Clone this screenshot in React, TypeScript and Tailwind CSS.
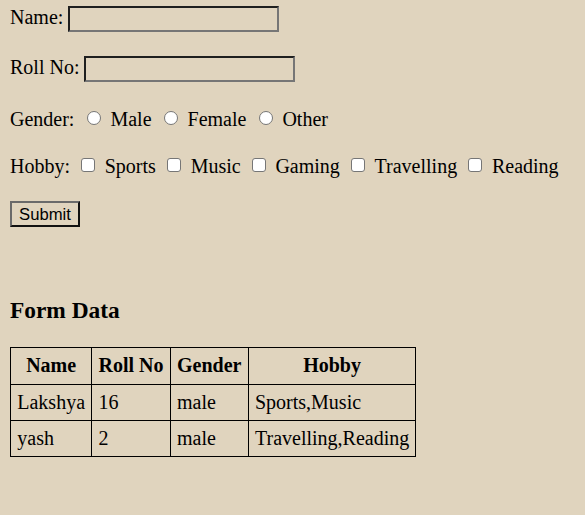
import React from "react";

const Radio = () => (
  <span className="ml-[11.25px] mr-[8.75px] mt-[2.5px] flex h-[16px] w-[16px] shrink-0 items-center justify-center">
    <span className="block h-[14px] w-[14px] rounded-full border border-[#767676] bg-white" />
  </span>
);

const Check = () => (
  <span className="ml-[10px] mr-[8.75px] mt-[1.5px] flex h-[16px] w-[16px] shrink-0 items-center justify-center">
    <span className="block h-[14px] w-[14px] rounded-[3px] border border-[#767676] bg-white" />
  </span>
);

const TextInput = () => (
  <span className="ml-[5px] block h-[26px] w-[211px] shrink-0 border-2 border-t-[#1f1f1f] border-l-[#1f1f1f] border-b-[#767676] border-r-[#767676]" />
);

export default function App() {
  const rows = [
    { name: "Lakshya", roll: "16", gender: "male", hobby: "Sports,Music" },
    { name: "yash", roll: "2", gender: "male", hobby: "Travelling,Reading" },
  ];
  return (
    <div className="min-h-[515px] w-full bg-[#e0d4be] px-[10px] font-['Liberation_Serif',serif] text-[20px] leading-[23px] text-black">
      <div className="flex flex-col pt-[6px]">
        <div className="flex h-[26px] items-start">
          <span className="leading-[23px]">Name:</span>
          <TextInput />
        </div>
        <div className="mt-[24px] flex h-[26px] items-start">
          <span>Roll No:</span>
          <TextInput />
        </div>
        <div className="mt-[25.5px] flex h-[23px] items-start">
          <span>Gender:</span>
          <Radio />
          <span>Male</span>
          <Radio />
          <span>Female</span>
          <Radio />
          <span>Other</span>
        </div>
        <div className="mt-[24.5px] flex h-[23px] items-start">
          <span>Hobby:</span>
          <Check />
          <span>Sports</span>
          <Check />
          <span>Music</span>
          <Check />
          <span>Gaming</span>
          <Check />
          <span>Travelling</span>
          <Check />
          <span>Reading</span>
        </div>
        <div className="mt-[23px] flex">
          <button
            type="button"
            className="flex h-[26px] w-[70px] items-center justify-center border-2 border-t-[#6a6a6a] border-l-[#6a6a6a] border-b-[#111] border-r-[#111] bg-transparent font-['Liberation_Sans',sans-serif] text-[16.67px] leading-[19px] text-black"
          >
            Submit
          </button>
        </div>
        <h3 className="mt-[70px] text-[23.4px] font-bold leading-[27px]">Form Data</h3>
        <table className="mt-[23px] w-max border-collapse border border-black">
          <thead>
            <tr>
              {["Name", "Roll No", "Gender", "Hobby"].map((h) => (
                <th key={h} className="border border-black px-[6.25px] py-[6.25px] text-center align-middle font-bold leading-[23px]">
                  {h}
                </th>
              ))}
            </tr>
          </thead>
          <tbody>
            {rows.map((r) => (
              <tr key={r.name}>
                {[r.name, r.roll, r.gender, r.hobby].map((c, i) => (
                  <td key={i} className="border border-black px-[6.25px] py-[6px] text-left align-middle leading-[23px]">
                    {c}
                  </td>
                ))}
              </tr>
            ))}
          </tbody>
        </table>
      </div>
    </div>
  );
}
